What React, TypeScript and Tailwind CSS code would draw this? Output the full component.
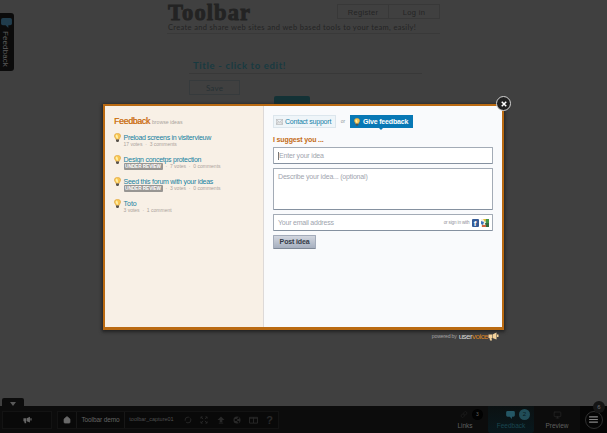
import { Home, Monitor, Link } from 'lucide-react';
import type { ReactNode } from 'react';

function Bulb({ className = 'h-[9px] w-[7px]' }: { className?: string }) {
  return (
    <svg viewBox="0 0 14 18" className={className}>
      <path d="M7 .5C3 .5.8 3 .8 6c0 3 2.700 4.500 3 7h6.400c.3-2.500 3-4 3-7C13.200 3 11 .5 7 .5Z" fill="#f8c552" stroke="#d99a38" />
      <path d="M5.500 3C4 3.500 3 5 3.500 7c.6 2 2 3 2.500 4h2C8 8 8 5 5.500 3Z" fill="#fff0a8" />
      <path d="M4 13h6v3l-1.500 2h-3L4 16Z" fill="#59534c" />
    </svg>
  );
}

function Megaphone({ className }: { className?: string }) {
  return (
    <svg viewBox="0 0 22 18" className={className} fill="currentColor">
      <path d="M1 5h7v7H7l1 5H4l-1-5H1Z" />
      <path d="M9 5 17 1v14l-8-3ZM18 5h3v5h-3Z" />
    </svg>
  );
}

function Bubble({ className }: { className?: string }) {
  return (
    <svg viewBox="0 0 12 11" className={className} fill="currentColor">
      <path d="M2 0h8q2 0 2 2v4q0 2-2 2H8v3L5 8H2Q0 8 0 6V2Q0 0 2 0Z" />
    </svg>
  );
}

type Idea = { title: string; votes: string; comments: string; review?: boolean; spacing: string };

const ideas: Idea[] = [
  { title: 'Preload screens in visitervieuw', votes: '17 votes', comments: '3 comments', spacing: 'tracking-[-0.28px]' },
  { title: 'Design concetps protection', votes: '7 votes', comments: '0 comments', review: true, spacing: 'tracking-[-0.26px]' },
  { title: 'Seed this forum with your ideas', votes: '3 votes', comments: '0 comments', review: true, spacing: 'tracking-[-0.26px]' },
  { title: 'Toto', votes: '3 votes', comments: '1 comment', spacing: 'tracking-[0px]' },
];

function IdeaRow({ idea }: { idea: Idea }) {
  return (
    <li className="flex h-[22px] gap-[2.500px]">
      <Bulb />
      <div className="min-w-0">
        <div className={`h-[8px] whitespace-nowrap text-[7px] leading-[9px] text-[#1680a0] ${idea.spacing}`}>{idea.title}</div>
        <div className="flex h-[7px] items-center whitespace-pre text-[5px] leading-[7px] text-[#aaa29b]">
          {idea.review && <span className="mr-[3px] flex h-[7px] w-[39px] items-center justify-center rounded-[1px] bg-[#989693] text-[4.700px] font-bold leading-[7px] tracking-[-0.05px] text-white">UNDER REVIEW</span>}
          {idea.review && '·  '}{idea.votes}  ·  {idea.comments}
        </div>
      </div>
    </li>
  );
}

function IdeasPanel() {
  return (
    <aside className="w-[159px] shrink-0 border-r border-[#ddd9d8] bg-[#f8f0e6] pl-[9px] pt-[9px]">
      <h2 className="flex h-[12px] items-baseline gap-[2px] text-[8.700px] leading-[12px] text-[#cc741b]">
        <span className="tracking-[-0.28px] [text-shadow:0.3px_0_#cc741b]">Feedback</span><span className="text-[5.200px] text-[#aaa49d]">browse ideas</span>
      </h2>
      <ul className="mt-[6px]">{ideas.map((idea) => <IdeaRow key={idea.title} idea={idea} />)}</ul>
    </aside>
  );
}

function FormPanel() {
  const field = 'box-border w-[220px] rounded-[1px] border border-[#a3abb6] border-b-[#8591a0] bg-white px-[4px] text-[7px] tracking-[-0.18px] text-[#a0a4ae]';
  return (
    <section className="min-w-0 flex-1 bg-[#f9fafc] pl-[9px] pt-[9px]">
      <div className="flex h-[13px] items-center">
        <div className="flex h-[13px] w-[63px] items-center gap-[2px] border border-[#dce6ed] bg-[#eff5f9] pl-[2px] text-[7px] text-[#1680a8]">
          <svg viewBox="0 0 14 11" className="h-[6px] w-[7px]" fill="#e4e5e6" stroke="#a6a7a8"><path d="M.5.5h13v10H.5ZM.5.5 7 6l6.500-5.500M.5 10 5 5m8.500 5L9 5" /></svg>
          <span className="whitespace-nowrap leading-[9px] tracking-[-0.22px]">Contact support</span>
        </div>
        <span className="w-[14px] text-center text-[5px] text-[#9299a0]">or</span>
        <div className="relative flex h-[13px] w-[63px] items-center gap-[3px] bg-[#0878b5] pl-[4px] text-[7px] font-bold text-white">
          <Bulb className="h-[8px] w-[6px]" /><span className="whitespace-nowrap leading-[9px] tracking-[-0.18px]">Give feedback</span>
          <span className="absolute left-[29px] top-[13px] border-x-[2px] border-t-[2px] border-x-transparent border-t-[#0878b5]" />
        </div>
      </div>
      <h3 className="mt-[7px] h-[12px] text-[7px] font-bold leading-[9px] tracking-[-0.14px] text-[#c46b15]">I suggest you ...</h3>
      <div className={`flex h-[17px] items-center pt-px ${field} border-[#87919f]`}><span className="h-[8px] w-px bg-[#777]" />Enter your idea</div>
      <div className={`mt-[4px] h-[42px] pt-[3px] leading-[9px] ${field}`}>Describe your idea... (optional)</div>
      <div className={`mt-[4px] flex h-[17px] items-center pt-px ${field}`}>
        <span className="tracking-[-0.22px]">Your email address</span>
        <span className="ml-auto mr-[2px] whitespace-nowrap text-[4.600px] tracking-[-0.15px] text-[#90949a]">or sign in with</span>
        <span className="flex h-[8px] w-[7px] items-end justify-center rounded-[1px] bg-[#365b96] text-[8px] font-bold leading-[7px] text-white">f</span>
        <svg viewBox="0 0 8 8" className="-mr-[1px] ml-[2.500px] h-[8px] w-[8px]"><path d="M0 0h8v8H0Z" fill="#f1eee3" /><path d="M4 0h4v4H5Z" fill="#459448" /><path d="M0 2 3 3 2 6 0 5Z" fill="#3673bd" /><path d="M2 0h3L4 3Z" fill="#e8bd31" /><path d="M4 4h4v4H5Z" fill="#356a40" /><path d="M1 6h4v2H1Z" fill="#cf6541" /></svg>
      </div>
      <div className="mt-[4px] flex h-[14px] w-[43px] items-center justify-center rounded-[1px] border border-[#a3abba] border-b-[#7f8998] bg-linear-to-b from-[#d2d6df] to-[#a6afbf] text-[7px] font-bold tracking-[-0.15px] text-[#333946]">Post idea</div>
    </section>
  );
}

function FeedbackDialog() {
  return (
    <div className="absolute left-[103px] top-[104px] w-[401px]">
      <div className="flex h-[226px] border-x-[2px] border-b-[3px] border-t-[2px] border-[#ba6a12] bg-white shadow-[0_1px_3px_1px_#222]">
        <IdeasPanel /><FormPanel />
      </div>
      <div className="absolute -top-[8px] right-[-7px] grid h-[15px] w-[15px] place-items-center rounded-full border-[1.500px] border-[#d4d4d4] bg-[#222]">
        <svg viewBox="0 0 8 8" className="h-[6px] w-[6px]" stroke="white" strokeWidth="2"><path d="m1 1 6 6m0-6L1 7" /></svg>
      </div>
      <div className="mt-[1px] flex h-[11px] items-center justify-end pr-[5px] text-[5.200px] text-[#a2a2a2]">
        <span className="mr-[2px] tracking-[-0.2px]">powered by</span><span className="text-[8px] tracking-[-0.550px] text-[#d5d5d5]">user<span className="text-[#d98324]">voice</span></span><Megaphone className="h-[9px] w-[11px] text-[#f3d29b]" />
      </div>
    </div>
  );
}

function PageContent() {
  return (
    <main className="h-[406px] pl-[167px]">
      <header className="flex h-[34px] w-[273px] flex-col border-b border-[#393939]">
        <div className="flex h-[22px] justify-between">
          <h1 className="pl-px pt-[2px] font-['Liberation_Serif',serif] text-[22.500px] font-bold leading-[21px] tracking-[1.1px] text-[#232323] [-webkit-text-stroke:0.9px_#232323]">Toolbar</h1>
          <nav className="mt-[4px] flex h-[15px] w-[103px] border border-[#383838] text-[7.500px] leading-[15px] tracking-[0.350px] text-[#242424]"><span className="w-[51px] border-r border-[#383838] text-center">Register</span><span className="flex-1 text-center">Log in</span></nav>
        </div>
        <p className="whitespace-nowrap pl-[1px] font-['Lato',sans-serif] text-[7.500px] leading-[11px] tracking-[0.340px] text-[#242424]">Create and share web sites and web based tools to your team, easily!</p>
      </header>
      <section className="ml-[22px] mt-[23px] w-[233px]">
        <h2 className="h-[17px] border-b border-[#383838] pl-[4px] font-['Lato',sans-serif] text-[9.500px] font-bold leading-[17px] tracking-[0.650px] text-[#183a40]">Title - click to edit!</h2>
        <div className="mt-[6px] h-[15px] w-[51px] border border-[#363a3c] text-center font-['Lato',sans-serif] text-[8px] leading-[15px] tracking-[0.2px] text-[#263034]">Save</div>
        <div className="ml-[85px] mt-[1px] h-[10px] w-[36px] rounded-t-[2px] bg-[#133236]" />
      </section>
    </main>
  );
}

function NavItem({ children, label, active = false }: { children: ReactNode; label: string; active?: boolean }) {
  return (
    <div className={`flex h-[27px] w-[46px] flex-col items-center justify-between pb-[3px] pt-[3px] text-[6.500px] ${active ? 'rounded-b-[3px] bg-linear-to-b from-[#0b1112] to-[#08181d] text-[#194650]' : 'text-[#606060]'}`}>
      <div className="flex h-[11px] items-center">{children}</div><span className="leading-[8px]">{label}</span>
    </div>
  );
}

function ToolIcons() {
  const icon = 'h-[8px] w-[8px]';
  return (
    <div className="flex flex-1 items-center justify-between pl-[6px] pr-[5px] text-[#292929]">
      <svg viewBox="0 0 18 18" className={icon} fill="none" stroke="currentColor" strokeWidth="2"><circle cx="9" cy="9" r="6.500" strokeDasharray="15 3" /></svg>
      <svg viewBox="0 0 18 18" className={icon} fill="none" stroke="currentColor" strokeWidth="2"><path d="M2 6V2h4m6 0h4v4m0 6v4h-4m-6 0H2v-4M2 2l5 5m9-5-5 5m5 9-5-5m-9 5 5-5" /></svg>
      <svg viewBox="0 0 18 18" className={icon} fill="currentColor"><path d="m9 1 8 8h-5v5H6V9H1ZM4 15h10v2H4Z" /></svg>
      <svg viewBox="0 0 18 18" className={icon}><circle cx="9" cy="9" r="8" fill="currentColor" /><path d="m12 5-6 4 6 4" fill="none" stroke="#090909" strokeWidth="2" /><path d="M11 3h3v4h-3Zm0 8h3v4h-3ZM4 7h4v4H4Z" fill="#090909" /></svg>
      <svg viewBox="0 0 20 18" className="h-[8px] w-[9px]" fill="none" stroke="currentColor" strokeWidth="2"><path d="M1 3h18v13H1ZM10 3v13M1 5h18" /></svg>
      <span className="text-[11px] font-bold leading-[10px]">?</span>
    </div>
  );
}

function BottomBar() {
  return (
    <footer className="flex h-[27px] items-center bg-[#0c0c0c] text-[#4b4b4b]">
      <div className="ml-[2px] flex h-[18px] w-[50px] items-center justify-center border border-[#131313] bg-[#090909]"><Megaphone className="h-[8px] w-[9px] text-[#666]" /></div>
      <div className="ml-[5px] flex h-[18px] w-[222px] items-center border border-[#131313] bg-[#090909]">
        <span className="grid h-full w-[19px] place-items-center border-r border-[#171717]"><Home className="h-[8px] w-[8px] text-[#696969]" fill="currentColor" /></span>
        <span className="flex h-full w-[48px] items-center justify-center border-r border-[#171717] text-[6.500px] tracking-[-0.1px] text-[#656565]">Toolbar demo</span>
        <span className="flex h-full w-[53px] items-center justify-center text-[5.500px] text-[#505050]">toolbar_capture01</span>
        <ToolIcons />
      </div>
      <div className="ml-auto flex h-full">
        <NavItem label="Links"><Link className="ml-[13px] h-[7px] w-[8px] text-[#222]" /><span className="ml-[4px] grid h-[11px] w-[11px] place-items-center rounded-full bg-[#020202] text-[5px]">3</span></NavItem>
        <NavItem label="Feedback" active><Bubble className="ml-[14px] h-[8px] w-[9px] text-[#245765]" /><span className="ml-[4px] grid h-[11px] w-[11px] place-items-center rounded-full bg-[#214d58] text-[6px] text-[#06191e]">2</span></NavItem>
        <NavItem label="Preview"><Monitor className="h-[8px] w-[9px] text-[#292929]" /></NavItem>
        <div className="grid w-[27px] place-items-center bg-[#050505]"><span className="grid h-[18px] w-[18px] place-items-center rounded-full border border-[#303030]"><svg viewBox="0 0 10 8" className="h-[7px] w-[9px]" stroke="#858585" strokeWidth="1.300"><path d="M0 1h10M0 4h10M0 7h10" /></svg></span></div>
      </div>
    </footer>
  );
}

export default function App() {
  return (
    <div className="relative h-[433px] w-[607px] overflow-hidden bg-[#404040] font-['Liberation_Sans',Arial,sans-serif]">
      <PageContent />
      <BottomBar />
      <div className="absolute left-0 top-[13px] h-[58px] w-[14px] rounded-r-[3px] bg-[#0b0b0b] pt-[5px] text-[#203c4c]"><Bubble className="ml-px h-[10px] w-[11px]" /><span className="mt-[3px] block w-[11px] text-[8px] leading-[11px] tracking-[0.1px] text-[#5c5c5c] [writing-mode:vertical-rl]">Feedback</span></div>
      <div className="absolute left-[2px] top-[398px] grid h-[8px] w-[22px] place-items-center rounded-t-[2px] bg-[#0c0c0c]"><span className="mt-[4px] border-x-[3px] border-t-[4px] border-x-transparent border-t-[#595959]" /></div>
      <div className="absolute left-[593px] top-[401px] grid h-[12px] w-[12px] place-items-center rounded-full bg-[#151515] text-[6px] text-[#707070]">6</div>
      <FeedbackDialog />
    </div>
  );
}
